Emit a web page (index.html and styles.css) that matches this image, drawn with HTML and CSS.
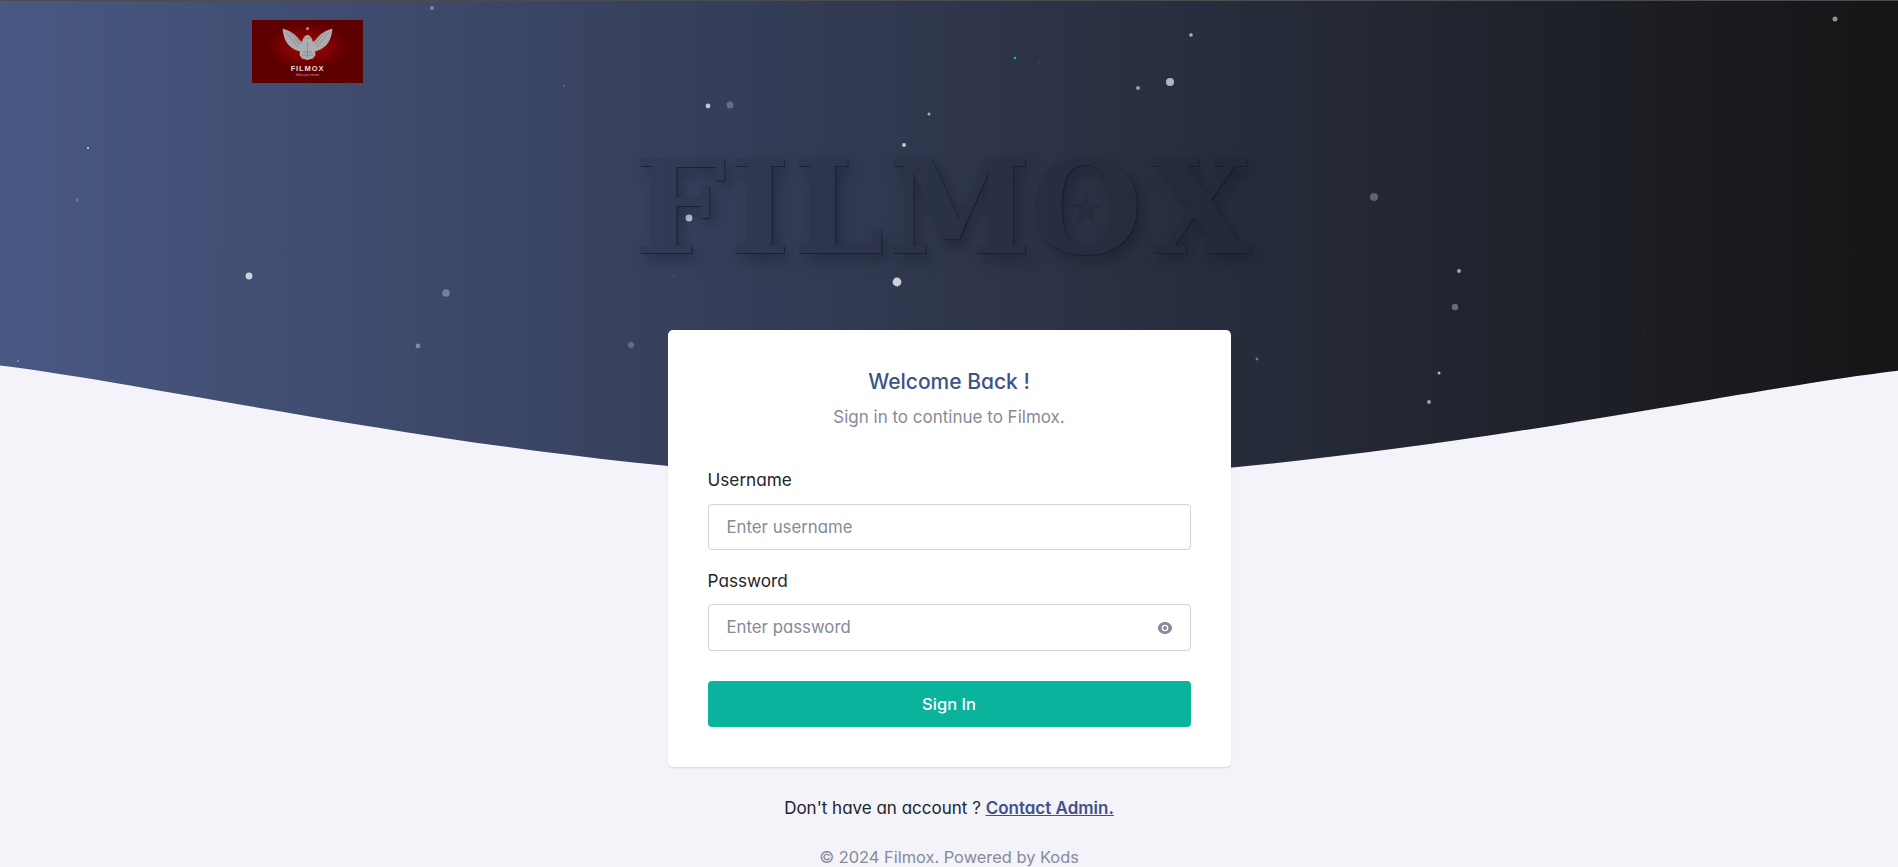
FILE: index.html
```html
<!DOCTYPE html>
<html>
<head>
	<title>Sign In | Filmox</title>
	<link rel="stylesheet" href="styles.css">
</head>

<body>
	<div class="auth-bg">
		<svg class="particles" viewBox="0 0 1898 477" width="1898" height="477">
			<circle cx="432" cy="8" r="2" fill="#7f89a6"/>
			<circle cx="1835" cy="19" r="2.5" fill="#8f9194"/>
			<circle cx="1191" cy="35" r="1.8" fill="#b0b3ba"/>
			<circle cx="1015" cy="58" r="1.2" fill="#10c8a8"/>
			<circle cx="1170" cy="82" r="4" fill="#b4b6bb"/>
			<circle cx="1138" cy="88" r="2" fill="#9a9ea8"/>
			<circle cx="1039" cy="62" r="0.6" fill="#5f6b80"/>
			<circle cx="564" cy="86" r="0.8" fill="#7c87a6"/>
			<circle cx="708" cy="106" r="2.4" fill="#c2c5d2"/>
			<circle cx="730" cy="105" r="3.5" fill="#646d8b"/>
			<circle cx="929" cy="114" r="1.5" fill="#a5aabb"/>
			<circle cx="904" cy="145" r="2" fill="#c2c5d0"/>
			<circle cx="88" cy="148" r="1.1" fill="#c9d8ea"/>
			<circle cx="77" cy="200" r="1.5" fill="#6d7a9e"/>
			<circle cx="1374" cy="197" r="4" fill="#5f636d"/>
			<circle cx="689" cy="218" r="3.4" fill="#c8cad4"/>
			<circle cx="249" cy="276" r="3.4" fill="#d0d2dc"/>
			<circle cx="897" cy="282" r="4.4" fill="#cdd0d8"/>
			<circle cx="446" cy="293" r="3.8" fill="#767f9d"/>
			<circle cx="1459" cy="271" r="2" fill="#a0a2a7"/>
			<circle cx="1455" cy="307" r="3.2" fill="#696c73"/>
			<circle cx="418" cy="346" r="2.4" fill="#7f89a6"/>
			<circle cx="631" cy="345" r="3" fill="#646e8e"/>
			<circle cx="18" cy="361" r="0.8" fill="#b9c0d4"/>
			<circle cx="1257" cy="359" r="1.4" fill="#777a82"/>
			<circle cx="1439" cy="373" r="1.5" fill="#b4b6ba"/>
			<circle cx="1429" cy="402" r="2" fill="#9b9da2"/>
			<circle cx="674" cy="276" r="0.6" fill="#6d7690"/>
			<circle cx="1644" cy="331" r="0.6" fill="#55585e"/>
		</svg>
		<svg class="wave" viewBox="0 0 1440 120" preserveAspectRatio="none">
			<path d="M 0,36 C 144,53.6 432,123.2 720,124 C 1008,124.8 1296,56.8 1440,40 L 1440,140 L 0,140 z"></path>
		</svg>
	</div>

	<div class="page">
		<div class="logo-row">
			<svg class="logo" viewBox="0 0 111 63" width="111" height="63">
				<defs>
					<radialGradient id="logoglow" cx="50%" cy="42%" r="36%">
						<stop offset="0" stop-color="#a80808"/>
						<stop offset="0.55" stop-color="#820202"/>
						<stop offset="1" stop-color="#5e0000"/>
					</radialGradient>
				</defs>
				<rect width="111" height="63" fill="url(#logoglow)"/>
				<path class="eagle" d="M30.500 8.500 C36 10 43 13 47.500 20 L50 22 C51 18 53 15 55.500 15 C58 15 60 18 61 22 L63.500 20 C68 13 75 10 80.500 8.500 C80 15 78 21 74.500 25 C71 28.500 67 30.500 63 31.500 L63.500 35 L61 38.500 L55.500 40 L50 38.500 L47.500 35 L48 31.500 C44 30.500 40 28.500 36.500 25 C33 21 31 15 30.500 8.500 Z"></path>
				<path class="feathers" d="M34 12 L46 27 M38 12 L47 24 M42 14 L49 24 M69 14 L62 24 M73 12 L64 24 M77 12 L65 27 M52 18 L59 18 M55.500 22 L55.500 38 M51 32 L60 32 M50 35 L61 35"></path>
				<circle cx="55.500" cy="8.500" r="1.600" fill="#a98a8a"/>
				<text class="logo-name" x="55.500" y="51" text-anchor="middle">FILMOX</text>
				<text class="logo-tag" x="55.500" y="55.500" text-anchor="middle">follow your dream</text>
			</svg>
		</div>

		<div class="watermark">
			<span class="brand">FIL<span class="tight">M</span><span class="loose">O</span>X</span>
			<svg class="star" viewBox="0 0 40 40" width="36" height="37"><path d="M20 1 L24.500 15 L39 15 L27 24 L32 39 L20 29.500 L8 39 L13 24 L1 15 L15.500 15 Z"></path></svg>
		</div>

		<div class="card">
			<div class="card-head">
				<h5>Welcome Back !</h5>
				<p>Sign in to continue to Filmox.</p>
			</div>
			<form>
				<label for="username">Username</label>
				<input type="text" id="username" placeholder="Enter username">

				<label for="password" class="second">Password</label>
				<div class="pass-wrap">
					<input type="password" id="password" placeholder="Enter password">
					<svg class="eye" viewBox="0 0 24 24" width="16" height="16"><path d="M1.181 12C2.121 6.880 6.608 3 12 3c5.392 0 9.878 3.880 10.819 9-.94 5.120-5.427 9-10.819 9-5.392 0-9.878-3.880-10.819-9zM12 17a5 5 0 1 0 0-10 5 5 0 0 0 0 10zm0-2a3 3 0 1 1 0-6 3 3 0 0 1 0 6z"></path></svg>
				</div>

				<button type="button">Sign In</button>
			</form>
		</div>

		<p class="signup">Don't have an account ? <a href="#">Contact Admin.</a></p>
		<p class="copy">&copy; 2024 Filmox. Powered by Kods</p>
	</div>
</body>
</html>
```

FILE: styles.css
```css
html, body {
	height: 100%;
}

body {
	margin: 0;
	background: #f3f3f9;
	color: #212529;
	font-family: Inter, "Noto Sans", sans-serif;
	font-feature-settings: "cv11";
	font-size: 17px;
	overflow: hidden;
}

/* dark band behind the top of the page */
.auth-bg {
	position: absolute;
	top: 0;
	left: 0;
	width: 100%;
	height: 476px;
	overflow: hidden;
	border-top: 1px solid #4a4c50;
	box-sizing: border-box;
	background: linear-gradient(to right, #495883, #151515);
}

.particles {
	position: absolute;
	top: -1px;
	left: 0;
}

.wave {
	position: absolute;
	left: 0;
	bottom: 0;
	width: 100%;
	height: 158px;
	display: block;
}

.wave path {
	fill: #f3f3f9;
}

.page {
	position: relative;
	display: flex;
	flex-direction: column;
	align-items: center;
}

.logo-row {
	width: 100%;
	box-sizing: border-box;
	padding: 20px 0 0 252px;
	height: 83px;
}

.logo {
	display: block;
}

.eagle {
	fill: #adadaf;
}

.feathers {
	fill: none;
	stroke: #7d787a;
	stroke-width: 0.6;
}

.logo-name {
	font-family: "Liberation Sans", sans-serif;
	font-size: 7.500px;
	font-weight: bold;
	letter-spacing: 0.9px;
	fill: #e6dede;
}

.logo-tag {
	font-family: "Liberation Sans", sans-serif;
	font-size: 3px;
	fill: #c99a9a;
}

.watermark {
	position: relative;
	box-sizing: border-box;
	height: 130px;
	margin-top: 60px;
	width: 640px;
	padding-right: 10px;
	display: flex;
	justify-content: center;
	align-items: center;
}

/* page gradient clipped to the letters, so only the edges and shadow show */
.brand {
	font-family: "DejaVu Serif", serif;
	font-weight: bold;
	font-size: 130px;
	line-height: 130px;
	letter-spacing: 3px;
	color: transparent;
	background: linear-gradient(rgba(18, 24, 44, 0.14), rgba(18, 24, 44, 0.14)), linear-gradient(to right, #495883, #151515);
	background-size: 1898px 100%;
	background-position: -640px 0;
	-webkit-background-clip: text;
	background-clip: text;
	filter: drop-shadow(1.500px 1.500px 0 rgba(20, 26, 48, 0.75)) drop-shadow(5px 7px 7px rgba(12, 16, 30, 0.35));
}

.tight {
	letter-spacing: -2px;
}

.loose {
	letter-spacing: 8px;
}

.star {
	position: absolute;
	left: 439px;
	top: 47px;
}

.star path {
	fill: rgba(20, 26, 46, 0.2);
}

.card {
	width: 563px;
	height: 437px;
	margin-top: 57px;
	box-sizing: border-box;
	padding: 40px;
	background: #fff;
	border-radius: 5px;
	box-shadow: 0 1px 2px rgba(56, 65, 74, 0.15);
}

.card-head {
	text-align: center;
	height: 98px;
}

.card-head h5 {
	margin: 0;
	font-size: 21px;
	line-height: 24px;
	font-weight: 500;
	color: #405189;
}

.card-head p {
	margin: 11px 0 0;
	line-height: 24px;
	color: #878a99;
}

label {
	display: block;
	font-size: 17.200px;
	line-height: 24px;
	margin-bottom: 12px;
}

label.second {
	margin-top: 19px;
	margin-bottom: 11px;
}

input {
	display: block;
	width: 100%;
	height: 46px;
	box-sizing: border-box;
	padding: 0 18px;
	font-family: inherit;
	font-feature-settings: inherit;
	font-size: 16.800px;
	color: #212529;
	background: #fff;
	border: 1px solid #ced4da;
	border-radius: 4px;
	outline: none;
}

input::placeholder {
	color: #878a99;
	opacity: 1;
}

.pass-wrap {
	position: relative;
}

.pass-wrap input {
	height: 47px;
	padding-bottom: 2px;
}

.eye {
	position: absolute;
	right: 18px;
	top: 16px;
}

.eye path {
	fill: #878a99;
}

button {
	display: block;
	width: 100%;
	height: 46px;
	margin-top: 30px;
	font-family: inherit;
	font-feature-settings: inherit;
	font-size: 16.500px;
	font-weight: 500;
	color: #fff;
	background: #0ab39c;
	border: 0;
	border-radius: 4px;
}

.signup {
	margin: 29px 0 0;
	line-height: 24px;
}

.signup a {
	color: #405189;
	font-weight: 600;
}

.copy {
	margin: 27px 0 0;
	font-size: 16.400px;
	line-height: 20px;
	color: #878a99;
}
```
